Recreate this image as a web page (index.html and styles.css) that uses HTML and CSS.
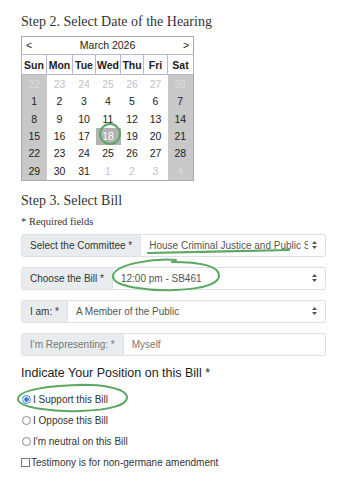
FILE: index.html
```html
<!DOCTYPE html>
<html lang="en">
<head>
    <meta charset="UTF-8">
    <meta name="viewport" content="width=device-width, initial-scale=1.0">
    <title>Testimony</title>
    <link rel="stylesheet" href="styles.css">
</head>
<body>
    <div class="page">
        <h2 class="step">Step 2. Select Date of the Hearing</h2>

        <!-- Calendar -->
        <table class="calendar">
            <colgroup>
                <col style="width:25px"><col style="width:26px"><col style="width:23px"><col style="width:25px"><col style="width:23px"><col style="width:24px"><col style="width:26px">
            </colgroup>
            <tr class="cal-head">
                <td colspan="7"><div class="cal-bar"><span>&lt;</span><span>March 2026</span><span>&gt;</span></div></td>
            </tr>
            <tr class="cal-days">
                <th>Sun</th><th>Mon</th><th>Tue</th><th>Wed</th><th>Thu</th><th>Fri</th><th>Sat</th>
            </tr>
            <tr>
                <td class="we other">22</td><td class="other">23</td><td class="other">24</td><td class="other">25</td><td class="other">26</td><td class="other">27</td><td class="we other">28</td>
            </tr>
            <tr>
                <td class="we">1</td><td>2</td><td>3</td><td>4</td><td>5</td><td>6</td><td class="we">7</td>
            </tr>
            <tr>
                <td class="we">8</td><td>9</td><td>10</td><td>11</td><td>12</td><td>13</td><td class="we">14</td>
            </tr>
            <tr>
                <td class="we">15</td><td>16</td><td>17</td><td class="sel">18</td><td>19</td><td>20</td><td class="we">21</td>
            </tr>
            <tr>
                <td class="we">22</td><td>23</td><td>24</td><td>25</td><td>26</td><td>27</td><td class="we">28</td>
            </tr>
            <tr>
                <td class="we">29</td><td>30</td><td>31</td><td class="other">1</td><td class="other">2</td><td class="other">3</td><td class="we other">4</td>
            </tr>
        </table>

        <h2 class="step step3">Step 3. Select Bill</h2>
        <p class="required">* Required fields</p>

        <div class="group">
            <div class="addon">Select the Committee *</div>
            <div class="field select">
                <span class="value">House Criminal Justice and Public Safety</span>
                <svg class="arrows" width="5" height="8" viewBox="0 0 5 8"><path d="M0 3 L2.5 0 L5 3 Z M0 5 L2.5 8 L5 5 Z" fill="#555"/></svg>
            </div>
        </div>
        <div class="group">
            <div class="addon">Choose the Bill *</div>
            <div class="field select">
                <span class="value">12:00 pm - SB461</span>
                <svg class="arrows" width="5" height="8" viewBox="0 0 5 8"><path d="M0 3 L2.5 0 L5 3 Z M0 5 L2.5 8 L5 5 Z" fill="#555"/></svg>
            </div>
        </div>
        <div class="group">
            <div class="addon">I am: *</div>
            <div class="field select">
                <span class="value">A Member of the Public</span>
                <svg class="arrows" width="5" height="8" viewBox="0 0 5 8"><path d="M0 3 L2.5 0 L5 3 Z M0 5 L2.5 8 L5 5 Z" fill="#555"/></svg>
            </div>
        </div>
        <div class="group muted last">
            <div class="addon">I'm Representing: *</div>
            <div class="field">
                <span class="value">Myself</span>
            </div>
        </div>

        <h3 class="position">Indicate Your Position on this Bill *</h3>
        <label class="choice"><span class="radio checked"></span>I Support this Bill</label>
        <label class="choice"><span class="radio"></span>I Oppose this Bill</label>
        <label class="choice"><span class="radio"></span>I'm neutral on this Bill</label>
        <label class="choice check"><span class="box"></span>Testimony is for non-germane amendment</label>
    </div>

    <!-- hand drawn marks on top of the form -->
    <svg class="marks" width="360" height="483" viewBox="0 0 360 483">
        <circle cx="110" cy="134" r="10" fill="none" stroke="#5aa862" stroke-width="2"/>
        <path d="M148 253 C 190 252, 250 251, 289 250" fill="none" stroke="#5aa862" stroke-width="2.2" stroke-linecap="round"/>
        <path d="M176 260 C 150 258, 114 265, 113 276 C 112 287, 150 291, 175 290 C 205 289, 220 283, 219 275 C 218 266, 200 262, 172 262" fill="none" stroke="#5aa862" stroke-width="2" stroke-linecap="round"/>
        <path d="M84 385 C 50 385, 18 390, 18 399 C 18 408, 55 412, 80 411 C 110 410, 128 405, 127 397 C 126 388, 100 384, 74 385" fill="none" stroke="#5aa862" stroke-width="2" stroke-linecap="round"/>
    </svg>
</body>
</html>
```

FILE: styles.css
```css
/* General Body Styling */
body {
    margin: 0;
    padding: 0;
    background: #fff;
    font-family: 'Liberation Sans', Arial, sans-serif;
    color: #333;
}

.page {
    padding: 12px 0 0 21px;
    width: 305px;
}

/* Step Headings */
.step {
    font-family: 'Liberation Serif', 'Times New Roman', serif;
    font-weight: normal;
    font-size: 14px;
    line-height: 20px;
    margin: 0 0 4px 0;
    color: #333;
}

.step3 {
    margin-top: 10px;
}

.required {
    font-family: 'Liberation Serif', 'Times New Roman', serif;
    font-size: 10.5px;
    line-height: 14px;
    margin: 0 0 5px 0;
    color: #333;
}

/* Calendar */
.calendar {
    border-collapse: collapse;
    table-layout: fixed;
    width: 172px;
    border: 1px solid #aaa;
    font-size: 10.5px;
    line-height: 1;
}

.calendar td, .calendar th {
    padding: 0;
    text-align: center;
}

.cal-head td {
    background: #c6c6c6;
    height: 15px;
    color: #555;
}

.cal-bar {
    display: flex;
    justify-content: space-between;
    padding: 0 4px;
    font-size: 10.5px;
}

.cal-days th {
    height: 19px;
    background: #fff;
    border: 1px solid #b6b6d6;
    color: #222;
    font-weight: bold;
    font-size: 10.5px;
}

.calendar tr td {
    height: 17.4px;
    color: #222;
    background: #fff;
}

.calendar td.we {
    background: #c8c8c8;
}

.calendar td.other {
    color: #c4c4c4;
}

.calendar td.we.other {
    color: #dcdcdc;
}

.calendar td.sel {
    background: #b3b3b3;
    color: #fff;
}

/* Input Groups */
.group {
    display: flex;
    height: 23px;
    margin-bottom: 10px;
    font-size: 10px;
}

.group.last {
    margin-bottom: 0;
}

.addon {
    display: flex;
    align-items: center;
    padding: 0 8px;
    background: #e9ecef;
    border: 1px solid #dde1e5;
    border-radius: 3px 0 0 3px;
    color: #333;
    white-space: nowrap;
}

.field {
    flex: 1;
    display: flex;
    align-items: center;
    min-width: 0;
    padding: 0 8px;
    border: 1px solid #dde1e5;
    border-left: none;
    border-radius: 0 3px 3px 0;
    background: #fff;
    color: #444;
}

.value {
    flex: 1;
    overflow: hidden;
    white-space: nowrap;
}

.select .value {
    color: #555;
}

.arrows {
    margin-left: 4px;
    flex: none;
}

.muted .addon, .muted .value {
    color: #777;
}

/* Position */
.position {
    font-size: 12.5px;
    font-weight: normal;
    line-height: 18px;
    margin: 8px 0 7px 0;
    color: #222;
}

.choice {
    display: flex;
    align-items: center;
    height: 21px;
    font-size: 10px;
    color: #333;
}

.radio {
    width: 7px;
    height: 7px;
    border: 1px solid #888;
    border-radius: 50%;
    margin: 0 2px 0 1px;
    box-sizing: content-box;
}

.radio.checked {
    border-color: #3b7fd0;
    background: radial-gradient(circle, #3b7fd0 0 2px, #fff 2.5px);
}

.box {
    width: 7px;
    height: 7px;
    border: 1px solid #777;
    margin-right: 1px;
}

/* Annotation marks */
.marks {
    position: absolute;
    top: 0;
    left: 0;
    pointer-events: none;
}
```
